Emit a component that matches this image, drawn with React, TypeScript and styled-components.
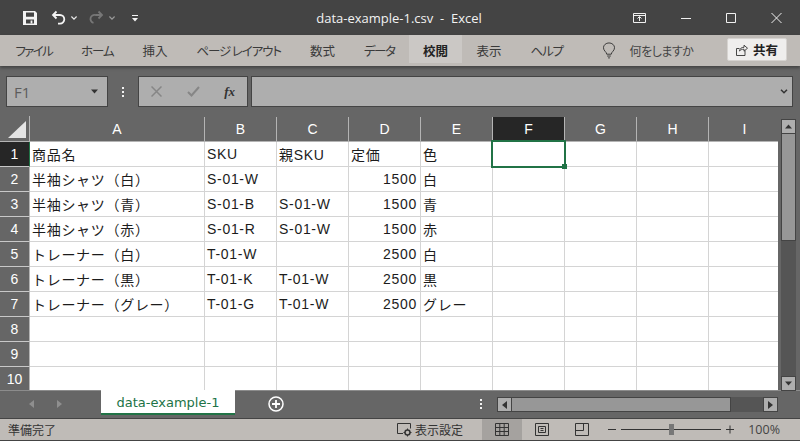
import React from "react";
import styled, { createGlobalStyle } from "styled-components";

const Global = createGlobalStyle`
  html, body { margin: 0; padding: 0; background: #666; }
  * { box-sizing: border-box; }
`;

const uiFont = `"Noto Sans CJK JP", "Noto Sans", sans-serif`;
const latinFont = `"Open Sans", "Noto Sans CJK JP", sans-serif`;
const cellFont = `"Liberation Sans", "Noto Sans CJK JP", sans-serif`;

const Page = styled.div`
  width: 800px;
  height: 441px;
  display: flex;
  flex-direction: column;
  overflow: hidden;
  background: #666;
  font-family: ${uiFont};
`;

/* title bar */
const TitleBar = styled.div`
  height: 35px;
  flex: none;
  background: #444;
  display: grid;
  grid-template-columns: 1fr auto 1fr;
  align-items: center;
  color: #fff;
`;

const QuickAccess = styled.div`
  display: flex;
  align-items: center;
  padding-left: 22px;
`;

const QuickIcon = styled.svg<{ $gap?: number; $left?: number }>`
  display: block;
  flex: none;
  margin-right: ${(p) => p.$gap ?? 0}px;
  margin-left: ${(p) => p.$left ?? 0}px;
`;

const Title = styled.div`
  font-family: ${latinFont};
  font-size: 13px;
  white-space: pre;
  color: #f2f2f2;
  margin-left: -2px;
`;

const WindowButtons = styled.div`
  display: flex;
  justify-content: flex-end;
  align-items: center;
  padding-right: 18px;
  gap: 35px;
`;

/* ribbon tabs */
const Ribbon = styled.div`
  height: 31px;
  flex: none;
  display: flex;
  align-items: flex-start;
  background: #bfbbb7;
  padding: 0 13px 0 1px;
  box-shadow: 0 2px 3px rgba(0, 0, 0, 0.35);
  position: relative;
`;

const RibbonTab = styled.div<{ $active?: boolean; $squeeze?: number }>`
  height: 28px;
  padding: 2px ${(p) => (p.$active ? 14 : 14.5)}px 0;
  display: flex;
  align-items: center;
  font-size: 12.5px;
  font-feature-settings: "palt";
  letter-spacing: ${(p) => p.$squeeze ?? 0}px;
  color: ${(p) => (p.$active ? "#222" : "#3a3a3a")};
  font-weight: ${(p) => (p.$active ? 700 : 400)};
  background: ${(p) => (p.$active ? "#cbc8c5" : "transparent")};
  white-space: pre;
`;

const TellMe = styled.div`
  height: 30px;
  display: flex;
  align-items: center;
  gap: 15px;
  margin-left: 25px;
  font-size: 12px;
  font-feature-settings: "palt";
  letter-spacing: -0.5px;
  color: #444;
`;

const ShareButton = styled.div`
  margin: 3px 0 0 auto;
  width: 60px;
  height: 23px;
  display: flex;
  align-items: center;
  justify-content: center;
  gap: 5px;
  background: #efeeed;
  border: 1px solid #d6d3d0;
  border-radius: 2px;
  font-size: 12.5px;
  font-weight: 700;
  color: #222;
`;

/* formula bar */
const FormulaBar = styled.div`
  height: 50px;
  flex: none;
  display: flex;
  align-items: center;
  padding: 1px 7px 0 6px;
  background: #666;
`;

const NameBox = styled.div`
  width: 102px;
  height: 31px;
  display: flex;
  align-items: center;
  justify-content: space-between;
  padding: 0 9px 0 7px;
  background: #aeaeae;
  border: 1px solid #444;
  font-family: ${latinFont};
  font-size: 15px;
  color: #5c5c5c;
`;

const Dots = styled.div`
  display: flex;
  flex-direction: column;
  gap: 2px;
  width: 2px;
  flex: none;
  span {
    width: 2px;
    height: 2px;
    background: #f2f2f2;
  }
`;

const BarDots = styled(Dots)`
  margin: 0 14px;
`;

const FuncBox = styled.div`
  width: 110px;
  height: 31px;
  display: flex;
  align-items: center;
  justify-content: space-between;
  padding: 0 12px 0 12px;
  background: #aeaeae;
  border: 1px solid #444;
`;

const FxMark = styled.span`
  font-family: "Liberation Serif", serif;
  font-style: italic;
  font-weight: 700;
  font-size: 13px;
  color: #333;
`;

const FormulaInput = styled.div`
  flex: 1;
  height: 31px;
  margin-left: 3px;
  display: flex;
  align-items: center;
  justify-content: flex-end;
  padding-right: 4px;
  background: #aeaeae;
  border: 1px solid #444;
`;

/* sheet */
const SheetArea = styled.div`
  height: 274px;
  flex: none;
  display: flex;
`;

const Grid = styled.div`
  width: 778px;
  height: 274px;
  flex: none;
  overflow: hidden;
  display: grid;
  grid-template-columns: 30px 175px repeat(8, 72px);
  grid-auto-rows: 25px;
  grid-template-rows: 26px;
  align-content: start;
`;

const Corner = styled.div`
  background: #666;
  border-right: 1px solid #b4b4b4;
  border-bottom: 1px solid #b4b4b4;
  padding: 4px 0 0 8px;
`;

const ColHead = styled.div<{ $active?: boolean }>`
  margin-top: 1px;
  display: flex;
  align-items: center;
  justify-content: center;
  background: ${(p) => (p.$active ? "#262626" : "#666")};
  border-right: 1px solid #b4b4b4;
  border-bottom: 1px solid #b4b4b4;
  font-family: ${cellFont};
  font-size: 14px;
  color: #fff;
`;

const RowHead = styled.div<{ $active?: boolean }>`
  display: flex;
  align-items: center;
  justify-content: center;
  background: ${(p) => (p.$active ? "#262626" : "#666")};
  border-right: 1px solid ${(p) => (p.$active ? "#217346" : "#b4b4b4")};
  border-bottom: 1px solid #c8c8c8;
  font-family: ${cellFont};
  font-size: 14px;
  color: #fff;
`;

const Cell = styled.div<{ $right?: boolean }>`
  position: relative;
  background: #fff;
  border-right: 1px solid #d4d4d4;
  border-bottom: 1px solid #d4d4d4;
  display: flex;
  align-items: center;
  justify-content: ${(p) => (p.$right ? "flex-end" : "flex-start")};
  padding: 0 ${(p) => (p.$right ? 3 : 2)}px 1px 2px;
  font-family: ${cellFont};
  font-size: 14px;
  letter-spacing: 0.7px;
  color: #1c1c1c;
  white-space: nowrap;
`;

const Selection = styled.div`
  position: absolute;
  z-index: 1;
  left: -2px;
  top: -2px;
  right: -2px;
  bottom: -2px;
  border: 2px solid #217346;
  pointer-events: none;
  &::after {
    content: "";
    position: absolute;
    right: -3px;
    bottom: -3px;
    width: 5px;
    height: 5px;
    background: #217346;
  }
`;

const VScroll = styled.div`
  position: relative;
  z-index: 1;
  width: 15px;
  height: 272px;
  margin: 3px 0 0 3px;
  flex: none;
  display: flex;
  flex-direction: column;
  background: #555;
`;

const ScrollBtn = styled.div`
  flex: none;
  width: 15px;
  height: 15px;
  display: flex;
  align-items: center;
  justify-content: center;
  background: #aeaeae;
  border: 1px solid #444;
`;

const VThumb = styled.div`
  height: 107px;
  flex: none;
  background: #979797;
  border: 1px solid #444;
  border-top-width: 0;
`;

const VTrack = styled.div`
  flex: 1;
`;

/* sheet tabs */
const TabRow = styled.div`
  height: 28px;
  flex: none;
  display: flex;
  align-items: flex-start;
  background: #666;
  border-top: 1px solid #8c8c8c;
`;

const SheetNav = styled.div`
  width: 101px;
  height: 26px;
  padding-left: 29px;
  display: flex;
  align-items: center;
  gap: 23px;
`;

const SheetTab = styled.div`
  width: 134px;
  height: 25px;
  margin-top: -1px;
  padding-top: 2px;
  display: flex;
  align-items: center;
  justify-content: center;
  background: #fff;
  border-bottom: 2px solid #217346;
  font-family: "DejaVu Sans", sans-serif;
  font-size: 13px;
  color: #217346;
`;

const AddSheet = styled.div`
  margin: 5px 0 0 33px;
  display: flex;
`;

const TabDots = styled(Dots)`
  margin: 8px 15px 0 auto;
`;

const HScroll = styled.div`
  width: 281px;
  height: 15px;
  margin: 6px 22px 0 0;
  flex: none;
  display: flex;
  background: #555;
`;

const HThumb = styled.div`
  width: 219px;
  flex: none;
  background: #979797;
  border: 1px solid #444;
  border-left-width: 0;
`;

/* status bar */
const StatusBar = styled.div`
  height: 23px;
  flex: none;
  display: flex;
  align-items: stretch;
  background: #bfbbb7;
  border-top: 1px solid #444;
  border-bottom: 1px solid #444;
  font-size: 12px;
  font-feature-settings: "palt";
  color: #333;
`;

const Ready = styled.div`
  display: flex;
  align-items: center;
  padding-left: 8px;
`;

const DisplaySettings = styled.div`
  margin-left: auto;
  display: flex;
  align-items: center;
  gap: 3px;
  margin-right: 19px;
`;

const ViewButton = styled.div<{ $active?: boolean }>`
  width: 40px;
  display: flex;
  align-items: center;
  justify-content: center;
  background: ${(p) => (p.$active ? "#a5a29f" : "transparent")};
`;

const ZoomControl = styled.div`
  display: flex;
  align-items: center;
  gap: 5px;
  margin-left: 6px;
`;

const Slider = styled.div`
  position: relative;
  width: 100px;
  height: 1px;
  background: #333;
`;

const SliderThumb = styled.div`
  position: absolute;
  left: 48px;
  top: -5px;
  width: 5px;
  height: 11px;
  background: #777;
`;

const ZoomValue = styled.div`
  width: 66px;
  padding-right: 20px;
  font-family: ${latinFont};
  font-size: 12.5px;
  color: #444;
  display: flex;
  align-items: center;
  justify-content: flex-end;
  white-space: nowrap;
`;

const columns = ["A", "B", "C", "D", "E", "F", "G", "H", "I"];

const rows: string[][] = [
  ["商品名", "SKU", "親SKU", "定価", "色"],
  ["半袖シャツ（白）", "S-01-W", "", "1500", "白"],
  ["半袖シャツ（青）", "S-01-B", "S-01-W", "1500", "青"],
  ["半袖シャツ（赤）", "S-01-R", "S-01-W", "1500", "赤"],
  ["トレーナー（白）", "T-01-W", "", "2500", "白"],
  ["トレーナー（黒）", "T-01-K", "T-01-W", "2500", "黒"],
  ["トレーナー（グレー）", "T-01-G", "T-01-W", "2500", "グレー"],
  [],
  [],
  [],
];

const ribbonTabs = [
  { label: "ファイル", squeeze: -1.7 },
  { label: "ホーム", squeeze: -1.1 },
  { label: "挿入", squeeze: 0 },
  { label: "ページ レイアウト", squeeze: -1.1 },
  { label: "数式", squeeze: 0 },
  { label: "データ", squeeze: -1.5 },
];

const Triangle = ({ up }: { up?: boolean }) => (
  <svg width="7" height="5" viewBox="0 0 7 5">
    <path d={up ? "M3.5 0.5 7 4.5H0z" : "M0 .5h7L3.5 4.5z"} fill="#333" />
  </svg>
);

const SideArrow = ({ left, color = "#333" }: { left?: boolean; color?: string }) => (
  <svg width="5" height="8" viewBox="0 0 5 8">
    <path d={left ? "M5 0v8L0 4z" : "M0 0v8l5-4z"} fill={color} />
  </svg>
);

const SmallChevron = ({ color }: { color: string }) => (
  <svg width="6" height="4" viewBox="0 0 6 4" style={{ flex: "none" }}>
    <path d="M.4.5 3 3.1 5.6.5" fill="none" stroke={color} strokeWidth="1.2" />
  </svg>
);

export default function App() {
  return (
    <>
      <Global />
      <Page>
        <TitleBar>
          <QuickAccess>
            <QuickIcon width="16" height="16" viewBox="0 0 16 16" $gap={13}>
              <path
                fillRule="evenodd"
                d="M1 1h12l2 2v12H1zM4 2.6v4.2h8V2.6zM4 9.6V13.6h8V9.6zM8.6 10.6h1.8v2.6H8.6z"
                fill="#f4f4f4"
              />
            </QuickIcon>
            <QuickIcon width="15" height="15" viewBox="0 0 15 15" $gap={5}>
              <path d="M5.5 1.5 2 5l3.5 3.5" fill="none" stroke="#f4f4f4" strokeWidth="1.8" />
              <path
                d="M2.5 5H9a3.8 3.8 0 0 1 0 8.6H7"
                fill="none"
                stroke="#f4f4f4"
                strokeWidth="1.8"
              />
            </QuickIcon>
            <SmallChevron color="#e8e8e8" />
            <QuickIcon width="15" height="15" viewBox="0 0 15 15" $gap={5} $left={12}>
              <path d="M9.5 1.5 13 5 9.5 8.5" fill="none" stroke="#777" strokeWidth="1.8" />
              <path
                d="M12.5 5H6.5a3.8 3.8 0 0 0-2 7.8"
                fill="none"
                stroke="#777"
                strokeWidth="1.8"
              />
            </QuickIcon>
            <SmallChevron color="#999" />
            <QuickIcon width="6" height="8" viewBox="0 0 6 8" $left={17} style={{ marginTop: 2 }}>
              <path d="M0 0h6v1H0zM0 3h6L3 6.5z" fill="#f4f4f4" />
            </QuickIcon>
          </QuickAccess>
          <Title>{"data-example-1.csv  -  Excel"}</Title>
          <WindowButtons>
            <svg width="13" height="10" viewBox="0 0 13 10">
              <path
                d="M.5.5h12v9H.5zM.5 2.5h12M6.5 8V4M4.5 5.5l2-2 2 2"
                fill="none"
                stroke="#f0f0f0"
              />
            </svg>
            <svg width="10" height="10" viewBox="0 0 10 10">
              <path d="M0 5.5h10" stroke="#f0f0f0" />
            </svg>
            <svg width="10" height="10" viewBox="0 0 10 10">
              <path d="M.5.5h9v9h-9z" fill="none" stroke="#f0f0f0" />
            </svg>
            <svg width="11" height="10" viewBox="0 0 11 10">
              <path d="M.5 0l10 10M10.5 0l-10 10" stroke="#f0f0f0" />
            </svg>
          </WindowButtons>
        </TitleBar>

        <Ribbon>
          {ribbonTabs.map((t) => (
            <RibbonTab key={t.label} $squeeze={t.squeeze}>
              {t.label}
            </RibbonTab>
          ))}
          <RibbonTab $active>校閲</RibbonTab>
          <RibbonTab>表示</RibbonTab>
          <RibbonTab $squeeze={-1.1}>ヘルプ</RibbonTab>
          <TellMe>
            <svg width="12" height="17" viewBox="0 0 13 17">
              <path
                d="M4 12.5c0-2.5-3.5-3.6-3.5-7a6 5.2 0 0 1 12 0c0 3.4-3.5 4.5-3.5 7zM4.5 14.5h4M5.5 16.5h2"
                fill="none"
                stroke="#333"
              />
            </svg>
            何をしますか
          </TellMe>
          <ShareButton>
            <svg width="12" height="12" viewBox="0 0 12 12">
              <path
                d="M9 6.5v5H.5v-7h3M3.5 7c.3-2.5 2-3.7 4.5-3.7V1.2l3.5 3-3.5 3V5.2C6 5.2 4.5 5.8 3.5 7z"
                fill="none"
                stroke="#333"
                strokeWidth=".9"
              />
            </svg>
            共有
          </ShareButton>
        </Ribbon>

        <FormulaBar>
          <NameBox>
            F1
            <Triangle />
          </NameBox>
          <BarDots>
            <span />
            <span />
            <span />
          </BarDots>
          <FuncBox>
            <svg width="11" height="11" viewBox="0 0 11 11">
              <path d="M.5.5l10 10M10.5.5l-10 10" stroke="#868686" strokeWidth="1.5" />
            </svg>
            <svg width="13" height="11" viewBox="0 0 13 11">
              <path d="M1 6l3.5 3.5L12 1" fill="none" stroke="#868686" strokeWidth="2" />
            </svg>
            <FxMark>fx</FxMark>
          </FuncBox>
          <FormulaInput>
            <svg width="8" height="5" viewBox="0 0 8 5">
              <path d="M1 .8 4 3.8 7 .8" fill="none" stroke="#333" strokeWidth="1.5" />
            </svg>
          </FormulaInput>
        </FormulaBar>

        <SheetArea>
          <Grid>
            <Corner>
              <svg width="19" height="18" viewBox="0 0 19 18">
                <path d="M18 0v17H0z" fill="#e4e4e4" />
              </svg>
            </Corner>
            {columns.map((c) => (
              <ColHead key={c} $active={c === "F"}>
                {c}
              </ColHead>
            ))}
            {rows.map((row, r) => (
              <React.Fragment key={r}>
                <RowHead $active={r === 0}>{r + 1}</RowHead>
                {columns.map((c, i) => (
                  <Cell key={c} $right={i === 3 && r > 0}>
                    {row[i]}
                    {r === 0 && c === "F" && <Selection />}
                  </Cell>
                ))}
              </React.Fragment>
            ))}
          </Grid>
          <VScroll>
            <ScrollBtn>
              <Triangle up />
            </ScrollBtn>
            <VThumb />
            <VTrack />
            <ScrollBtn>
              <Triangle />
            </ScrollBtn>
          </VScroll>
        </SheetArea>

        <TabRow>
          <SheetNav>
            <SideArrow left color="#8f8f8f" />
            <SideArrow color="#8f8f8f" />
          </SheetNav>
          <SheetTab>data-example-1</SheetTab>
          <AddSheet>
            <svg width="16" height="16" viewBox="0 0 16 16">
              <circle cx="8" cy="8" r="7" fill="none" stroke="#fff" strokeWidth="1.5" />
              <path d="M8 4v8M4 8h8" stroke="#fff" strokeWidth="1.8" />
            </svg>
          </AddSheet>
          <TabDots>
            <span />
            <span />
            <span />
          </TabDots>
          <HScroll>
            <ScrollBtn>
              <SideArrow left />
            </ScrollBtn>
            <HThumb />
            <VTrack />
            <ScrollBtn>
              <SideArrow />
            </ScrollBtn>
          </HScroll>
        </TabRow>

        <StatusBar>
          <Ready>準備完了</Ready>
          <DisplaySettings>
            <svg width="15" height="14" viewBox="0 0 15 14">
              <path d="M6 10.5H.5V.5h13v5" fill="none" stroke="#333" />
              <circle cx="10.5" cy="9.5" r="2.5" fill="none" stroke="#333" strokeWidth="1.5" />
              <path d="M10.5 5.5v1.5M10.5 12v1.5M6.5 9.5H8M13 9.5h1.5" stroke="#333" />
            </svg>
            表示設定
          </DisplaySettings>
          <ViewButton $active>
            <svg width="14" height="13" viewBox="0 0 14 13">
              <path
                d="M.5.5h13v12H.5zM.5 4.5h13M.5 8.5h13M4.8.5v12M9.2.5v12"
                fill="none"
                stroke="#333"
              />
            </svg>
          </ViewButton>
          <ViewButton>
            <svg width="14" height="13" viewBox="0 0 14 13">
              <path
                d="M.5.5h13v12H.5zM3.5 3.5h7v6h-7zM5.5 5.5h3M5.5 7.5h3"
                fill="none"
                stroke="#333"
              />
            </svg>
          </ViewButton>
          <ViewButton>
            <svg width="14" height="13" viewBox="0 0 14 13">
              <path d="M.5.5h13v12H.5zM.5 7.5h8v-7" fill="none" stroke="#333" />
            </svg>
          </ViewButton>
          <ZoomControl>
            <svg width="8" height="9" viewBox="0 0 8 9">
              <path d="M0 4.5h8" stroke="#333" />
            </svg>
            <Slider>
              <SliderThumb />
            </Slider>
            <svg width="8" height="9" viewBox="0 0 8 9">
              <path d="M0 4.5h8M4 .5v8" stroke="#333" />
            </svg>
          </ZoomControl>
          <ZoomValue>100%</ZoomValue>
        </StatusBar>
      </Page>
    </>
  );
}
